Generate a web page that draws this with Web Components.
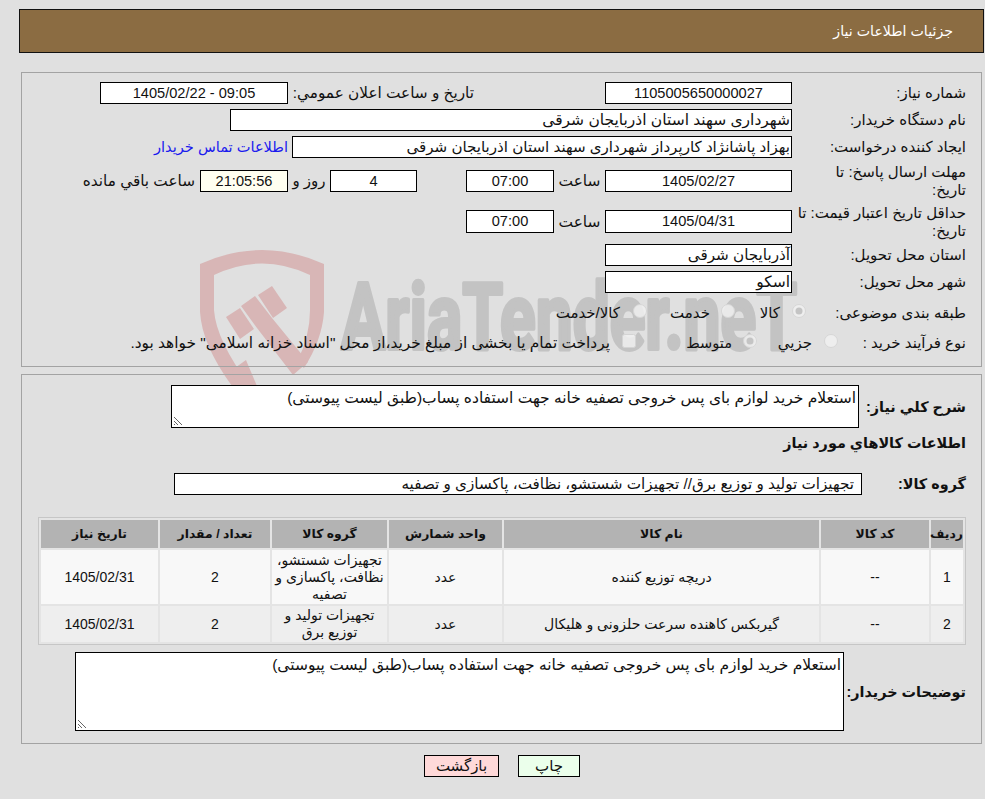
<!DOCTYPE html>
<html lang="fa">
<head>
<meta charset="utf-8">
<title>جزئیات اطلاعات نیاز</title>
<style>
html { background: #e0e0e0; }
body { margin: 0; font: 15px/18px "Liberation Sans", "DejaVu Sans", sans-serif; color: #111; overflow: hidden; height: 799px; }
</style>
</head>
<body>
<x-watermark></x-watermark>
<x-page>
  <x-titlebar>جزئیات اطلاعات نیاز</x-titlebar>

  <x-panel top="19" pad="9" end="12">
    <x-row label="شماره نیاز:">
      <x-field w="187" fs="14.6" center>1105005650000027</x-field>
      <x-text w="182" ml="131" fs="15.3">تاریخ و ساعت اعلان عمومي:</x-text>
      <x-field w="188" ml="4" fs="14.6" center>09:05 - 1405/02/22</x-field>
    </x-row>
    <x-row label="نام دستگاه خریدار:" top="5">
      <x-field w="562" fs="15.5">شهرداری سهند استان اذربایجان شرقی</x-field>
    </x-row>
    <x-row label="ایجاد کننده درخواست:" top="5">
      <x-field w="500" fs="15.1">بهزاد پاشانژاد کارپرداز شهرداری سهند استان اذربایجان شرقی</x-field>
      <x-text ml="4" fs="14.6" color="#1a1aee">اطلاعات تماس خریدار</x-text>
    </x-row>
    <x-row label="مهلت ارسال پاسخ: تا&#10;تاریخ:" top="4" h="38">
      <x-field w="187" fs="14.6" center>1405/02/27</x-field>
      <x-text w="51" fs="15.4" center>ساعت</x-text>
      <x-field w="88" fs="14.6" center>07:00</x-field>
      <x-field w="87" ml="49" fs="14.6" center>4</x-field>
      <x-text w="42" center>روز و</x-text>
      <x-field w="88" bg="#fffff0" fs="14.6" center>21:05:56</x-field>
      <x-text ml="5" fs="15.3">ساعت باقي مانده</x-text>
    </x-row>
    <x-row label="حداقل تاریخ اعتبار قیمت: تا&#10;تاریخ:" top="3" h="37">
      <x-field w="187" h="23" fs="14.6" center>1405/04/31</x-field>
      <x-text w="51" fs="15.4" center>ساعت</x-text>
      <x-field w="88" h="23" fs="14.6" center>07:00</x-field>
    </x-row>
    <x-row label="استان محل تحویل:" top="4">
      <x-field w="187" fs="15.2">آذربایجان شرقی</x-field>
    </x-row>
    <x-row label="شهر محل تحویل:" top="5">
      <x-field w="187" fs="15.5">اسکو</x-field>
    </x-row>
    <x-row label="طبقه بندی موضوعی:" top="9" lw="160">
      <x-option w="71" gap="12" checked>کالا</x-option>
      <x-option w="88" gap="11">خدمت</x-option>
      <x-option gap="13">کالا/خدمت</x-option>
    </x-row>
    <x-row label="نوع فرآیند خرید :" top="8" lw="128">
      <x-option w="81" gap="12">جزیي</x-option>
      <x-option w="121" gap="11" fs="14.6" checked>متوسط</x-option>
      <x-option gap="12" fs="15.4" box>پرداخت تمام یا بخشی از مبلغ خرید،از محل "اسناد خزانه اسلامی" خواهد بود.</x-option>
    </x-row>
  </x-panel>

  <x-panel top="7" pad="10" end="12">
    <x-row label="شرح کلي نیاز:" bold h="43" lw="107">
      <x-memo w="688" h="43">استعلام خرید لوازم بای پس خروجی تصفیه خانه جهت استفاده پساب(طبق لیست پیوستی)</x-memo>
    </x-row>
    <x-row label="اطلاعات کالاهاي مورد نیاز" bold top="4" h="18" lw="400"></x-row>
    <x-row label="گروه کالا:" bold top="19" lw="104">
      <x-field w="688" pad="7" fs="15.2">تجهیزات تولید و توزیع برق// تجهیزات شستشو، نظافت، پاکسازی و تصفیه</x-field>
    </x-row>
    <x-goods top="22"></x-goods>
    <x-row label="توضیحات خریدار:" bold top="7" h="79" lw="122">
      <x-memo w="769" h="79">استعلام خرید لوازم بای پس خروجی تصفیه خانه جهت استفاده پساب(طبق لیست پیوستی)</x-memo>
    </x-row>
  </x-panel>

  <x-actions>
    <x-button w="62" bg="#ebffeb">چاپ</x-button>
    <x-button w="75" bg="#ffd9d9">بازگشت</x-button>
  </x-actions>
</x-page>

<script>
class XPage extends HTMLElement {
    constructor() {
        super();
        this.attachShadow({mode: "open"}).innerHTML = `
<style>
:host { display: block; width: 965px; margin-left: 19px; padding-top: 9px; }
</style>
<slot></slot>`;
    }
}

class XTitlebar extends HTMLElement {
    constructor() {
        super();
        this.attachShadow({mode: "open"}).innerHTML = `
<style>
:host {
    display: block;
    box-sizing: border-box;
    height: 44px;
    border: 1px solid #111;
    background: #8b6c42;
    color: #fff;
    direction: rtl;
    font-size: 14.2px;
    line-height: 42px;
    padding-right: 30px;
}
</style>
<slot></slot>`;
    }
}

class XPanel extends HTMLElement {
    constructor() {
        super();
        this.attachShadow({mode: "open"}).innerHTML = `
<style>
:host {
    display: block;
    box-sizing: border-box;
    width: 961px;
    margin-left: 2px;
    border: 1px solid #a3a3a3;
    direction: rtl;
}
</style>
<slot></slot>`;
    }

    connectedCallback() {
        this.style.marginTop = this.getAttribute("top") + "px";
        this.style.paddingTop = this.getAttribute("pad") + "px";
        this.style.paddingBottom = this.getAttribute("end") + "px";
    }
}

class XRow extends HTMLElement {
    constructor() {
        super();
        this.attachShadow({mode: "open"}).innerHTML = `
<style>
:host {
    display: flex;
    align-items: center;
    direction: rtl;
    min-height: 22px;
    padding-right: 15px;
}
#label { flex: none; width: 174px; white-space: pre-line; }
:host([bold]) #label { font-weight: bold; font-size: 14.4px; }
</style>
<div id="label"></div>
<slot></slot>`;
    }

    connectedCallback() {
        this.shadowRoot.querySelector("#label").textContent = this.getAttribute("label");
        if(this.hasAttribute("lw")) {
            this.shadowRoot.querySelector("#label").style.width = this.getAttribute("lw") + "px";
        }
        if(this.hasAttribute("top")) {
            this.style.marginTop = this.getAttribute("top") + "px";
        }
        if(this.hasAttribute("h")) {
            this.style.height = this.getAttribute("h") + "px";
        }
    }
}

class XField extends HTMLElement {
    constructor() {
        super();
        this.attachShadow({mode: "open"}).innerHTML = `
<style>
:host {
    display: block;
    flex: none;
    box-sizing: border-box;
    height: 22px;
    border: 1px solid #000;
    background: #fff;
    line-height: 20px;
    padding: 0 1px;
    white-space: nowrap;
    overflow: hidden;
}
:host([center]) { text-align: center; }
</style>
<slot></slot>`;
    }

    connectedCallback() {
        this.style.width = this.getAttribute("w") + "px";
        this.style.fontSize = this.getAttribute("fs") + "px";
        if(this.hasAttribute("h")) {
            this.style.height = this.getAttribute("h") + "px";
        }
        if(this.hasAttribute("ml")) {
            this.style.marginRight = this.getAttribute("ml") + "px";
        }
        if(this.hasAttribute("bg")) {
            this.style.background = this.getAttribute("bg");
        }
        if(this.hasAttribute("pad")) {
            this.style.paddingRight = this.getAttribute("pad") + "px";
        }
    }
}

class XText extends HTMLElement {
    constructor() {
        super();
        this.attachShadow({mode: "open"}).innerHTML = `
<style>
:host { display: block; flex: none; white-space: nowrap; }
:host([center]) { text-align: center; }
</style>
<slot></slot>`;
    }

    connectedCallback() {
        if(this.hasAttribute("w")) {
            this.style.width = this.getAttribute("w") + "px";
        }
        if(this.hasAttribute("ml")) {
            this.style.marginRight = this.getAttribute("ml") + "px";
        }
        if(this.hasAttribute("fs")) {
            this.style.fontSize = this.getAttribute("fs") + "px";
        }
        if(this.hasAttribute("color")) {
            this.style.color = this.getAttribute("color");
        }
    }
}

class XOption extends HTMLElement {
    constructor() {
        super();
        this.attachShadow({mode: "open"}).innerHTML = `
<style>
:host { display: flex; flex: none; align-items: center; white-space: nowrap; }
svg { flex: none; width: 14px; height: 14px; margin-top: -4px; }
</style>
<svg viewBox="0 0 14 14"></svg>
<slot></slot>`;
    }

    connectedCallback() {
        const icon = this.shadowRoot.querySelector("svg");
        if(this.hasAttribute("box")) {
            icon.innerHTML = '<rect x=".5" y=".5" width="13" height="13" rx="2" fill="#f0f0f0" fill-opacity=".85" stroke="#d4d4d4"/>';
        }
        else {
            icon.innerHTML = '<circle cx="7" cy="7" r="6.5" fill="#f0f0f0" fill-opacity=".85" stroke="#d6d6d6"/>'
                + (this.hasAttribute("checked") ? '<circle cx="7" cy="7" r="3.5" fill="#c4c4c4"/>' : '');
        }
        icon.style.marginLeft = this.getAttribute("gap") + "px";
        if(this.hasAttribute("w")) {
            this.style.width = this.getAttribute("w") + "px";
        }
        if(this.hasAttribute("fs")) {
            this.style.fontSize = this.getAttribute("fs") + "px";
        }
    }
}

class XMemo extends HTMLElement {
    constructor() {
        super();
        this.attachShadow({mode: "open"}).innerHTML = `
<style>
:host {
    display: block;
    position: relative;
    flex: none;
    box-sizing: border-box;
    border: 1px solid #000;
    background: #fff;
    font-size: 15.5px;
    line-height: 20px;
    padding: 2px 2px;
}
svg { position: absolute; left: 1px; bottom: 1px; width: 10px; height: 10px; }
</style>
<slot></slot>
<svg viewBox="0 0 10 10" fill="none" stroke="#666" stroke-width="1">
  <path d="M1 1l8 8M1 5l4 4M1 8l1 1"/>
</svg>`;
    }

    connectedCallback() {
        this.style.width = this.getAttribute("w") + "px";
        this.style.height = this.getAttribute("h") + "px";
    }
}

const goodsColumns = [32, 108, 315, 113, 115, 110, 117];
const goodsHead = ["ردیف", "کد کالا", "نام کالا", "واحد شمارش", "گروه کالا", "تعداد / مقدار", "تاریخ نیاز"];
const goodsRows = [
    ["1", "--", "دریچه توزیع کننده", "عدد", "تجهیزات شستشو، نظافت، پاکسازی و تصفیه", "2", "1405/02/31"],
    ["2", "--", "گیربکس کاهنده سرعت حلزونی و هلیکال", "عدد", "تجهیزات تولید و توزیع برق", "2", "1405/02/31"]
];

class XGoods extends HTMLElement {
    constructor() {
        super();
        const cols = goodsColumns.map(w => `<col style="width:${w}px">`).join("");
        const head = goodsHead.map(t => `<th>${t}</th>`).join("");
        const rows = goodsRows.map(r => `<tr>${r.map(t => `<td>${t}</td>`).join("")}</tr>`).join("");
        this.attachShadow({mode: "open"}).innerHTML = `
<style>
:host { display: block; margin-right: 15px; width: 928px; }
table {
    table-layout: fixed;
    width: 928px;
    border-collapse: separate;
    border-spacing: 2px;
    border: 1px solid #c6c6c6;
    background: #e4e4e4;
    font-size: 14px;
    line-height: 17px;
    color: inherit;
    text-align: center;
}
th { height: 28px; padding: 0; background: #b3b3b3; font-size: 12.4px; }
td { padding: 0 1px; background: #f8f8f8; height: 54px; }
tr:nth-child(3) td { background: #eee; height: 36px; }
</style>
<table><colgroup>${cols}</colgroup><tbody><tr>${head}</tr>${rows}</tbody></table>`;
    }

    connectedCallback() {
        this.style.marginTop = this.getAttribute("top") + "px";
    }
}

class XActions extends HTMLElement {
    constructor() {
        super();
        this.attachShadow({mode: "open"}).innerHTML = `
<style>
:host { display: flex; direction: rtl; gap: 19px; margin-top: 11px; padding-right: 404px; }
</style>
<slot></slot>`;
    }
}

class XButton extends HTMLElement {
    constructor() {
        super();
        this.attachShadow({mode: "open"}).innerHTML = `
<style>
:host {
    display: block;
    box-sizing: border-box;
    height: 22px;
    border: 1px solid #000;
    line-height: 20px;
    text-align: center;
}
</style>
<slot></slot>`;
    }

    connectedCallback() {
        this.style.width = this.getAttribute("w") + "px";
        this.style.background = this.getAttribute("bg");
    }
}

class XWatermark extends HTMLElement {
    constructor() {
        super();
        this.attachShadow({mode: "open"}).innerHTML = `
<style>
:host { position: absolute; left: 0; top: 0; z-index: -1; width: 985px; height: 420px; }
svg { display: block; }
text {
    font-family: Roboto, sans-serif;
    font-weight: 700;
    font-size: 92px;
    fill: #c3c3c3;
    stroke: #c3c3c3;
    stroke-width: 4px;
    stroke-linejoin: round;
}
</style>
<svg width="985" height="420" viewBox="0 0 985 420">
  <g fill="#d8b6b6">
    <path fill-rule="evenodd" d="M200 264Q262 236 324 264V312Q322 340 304 368L297 362Q310 336 310 310V275Q262 252 214 275V310Q216 340 250 386H232Q202 345 200 312Z"/>
    <path d="M226 317L240 308 254 329 240 339Z"/>
    <path d="M241 306L255 296 272 318 308 362 293 375 257 328Z"/>
    <path d="M258 295L272 286 287 308 273 318Z"/>
    <path d="M232 370L246 360 257 386H236Z"/>
  </g>
  <text x="341" y="349" textLength="456" lengthAdjust="spacingAndGlyphs">AriaTender.neT</text>
</svg>`;
    }
}

customElements.define("x-page", XPage);
customElements.define("x-titlebar", XTitlebar);
customElements.define("x-panel", XPanel);
customElements.define("x-row", XRow);
customElements.define("x-field", XField);
customElements.define("x-text", XText);
customElements.define("x-option", XOption);
customElements.define("x-memo", XMemo);
customElements.define("x-goods", XGoods);
customElements.define("x-actions", XActions);
customElements.define("x-button", XButton);
customElements.define("x-watermark", XWatermark);
</script>
</body>
</html>
